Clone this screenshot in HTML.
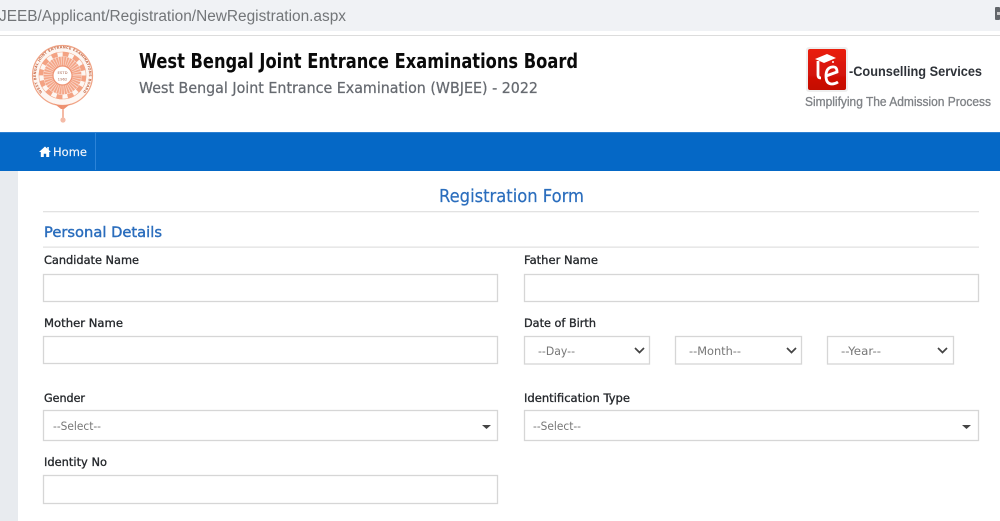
<!DOCTYPE html>
<html lang="en"><head><meta charset="utf-8"><title>Registration Form</title>
<style>
html,body{margin:0;padding:0;background:#fff;width:1000px;height:521px;overflow:hidden}
svg{position:absolute;left:0;top:0;display:block;filter:blur(.28px)}
text{font-family:"DejaVu Sans","Liberation Sans",sans-serif}
.lb{font-size:11.5px;fill:#25282c;stroke:#25282c;stroke-width:.32px}
.ph{font-size:11.5px;fill:#777}
.bx{fill:#fff;stroke:#d6d6d6;stroke-width:1.3px}
</style></head><body>
<svg width="1000" height="521" viewBox="0 0 1000 521" xmlns="http://www.w3.org/2000/svg">
<defs><filter id="b" x="-10%" y="-10%" width="120%" height="120%"><feGaussianBlur stdDeviation=".35"/></filter>
<filter id="s" x="-10%" y="-10%" width="120%" height="120%"><feGaussianBlur stdDeviation=".25"/></filter>
<linearGradient id="rd" x1="0" y1="0" x2="0" y2="1"><stop offset="0" stop-color="#ea2010"/><stop offset="1" stop-color="#c40a02"/></linearGradient>
<path id="arc" d="M43.800 93.700A26.500 26.500 0 1 1 81.200 93.700"/></defs>

<!-- browser bar -->
<rect width="1000" height="31" fill="#f0f2f5"/>
<rect y="35" width="1000" height="1" fill="#dcdcdc"/>
<text x="-1" y="21" font-size="15.500" fill="#727578" textLength="347" lengthAdjust="spacingAndGlyphs" style="font-family:'Liberation Sans',sans-serif">JEEB/Applicant/Registration/NewRegistration.aspx</text>
<rect x="995" y="7" width="5" height="13" rx="1" fill="#62666a"/>
<rect x="997" y="12" width="3" height="3" fill="#ccc"/>

<!-- logo -->
<g filter="url(#b)">
<circle cx="62.500" cy="75.500" r="30" fill="#fdf6f2" stroke="#f0a486" stroke-width="1.200"/>
<circle cx="62.500" cy="75.500" r="23.500" fill="none" stroke="#f3ab8e" stroke-width=".6"/>
<circle cx="62.500" cy="75.500" r="21.500" fill="none" stroke="#f3a283" stroke-width="4.500" stroke-dasharray="6 5.260"/>
<circle cx="62.500" cy="75.500" r="19" fill="#f4a587"/>
<circle cx="62.500" cy="75.500" r="14.500" fill="none" stroke="#fff" stroke-opacity=".55" stroke-width="9" stroke-dasharray=".8 1.500"/>
<circle cx="62.500" cy="75.500" r="9.500" fill="#fff" stroke="#ee9474" stroke-width="1.200"/>
<text x="62.500" y="74" font-size="3.800" text-anchor="middle" fill="#a86650">ESTD</text>
<text x="62.500" y="80.500" font-size="3.800" text-anchor="middle" fill="#a86650">1962</text>
<path d="M54 103.500Q63 107 71 103.500L64 109H61Z" fill="#ee8f6e"/>
<path d="M63 106V118" stroke="#ee9474" stroke-width="1.300"/>
<circle cx="63" cy="120" r="2.600" fill="#f4bba7"/>
</g>
<text font-size="3.500" font-weight="700" fill="#c9704f" filter="url(#s)" textLength="120"><textPath href="#arc" startOffset="2">WEST BENGAL JOINT ENTRANCE EXAMINATIONS BOARD</textPath></text>

<!-- headings -->
<text x="139" y="68" font-size="20" font-weight="700" fill="#0a0a0a" textLength="439" lengthAdjust="spacingAndGlyphs">West Bengal Joint Entrance Examinations Board</text>
<text x="139" y="93" font-size="15" fill="#666a70" stroke="#666a70" stroke-width=".25" textLength="399" lengthAdjust="spacingAndGlyphs">West Bengal Joint Entrance Examination (WBJEE) - 2022</text>

<!-- e-counselling logo -->
<g filter="url(#s)">
<rect x="806" y="47" width="42" height="45" rx="3" fill="#eee"/>
<rect x="808" y="49" width="38" height="41" rx="2" fill="url(#rd)"/>
<path d="M815 59L827 54L836 58L824 63Z" fill="#fff"/>
<path d="M818 61V75Q818 78 821 78" stroke="#fff" stroke-width="2.800" fill="none"/>
<path d="M833 61V63" stroke="#fff" stroke-width="1.500"/>
<path d="M826 76L837 72Q837 66 832 67Q826 68 826 76Q826 84 832 84Q835 84 838 82" stroke="#fff" stroke-width="2.800" fill="none"/>
</g>
<text x="849" y="76" font-size="13.500" font-weight="700" fill="#2e3238" textLength="133" lengthAdjust="spacingAndGlyphs" style="font-family:'Liberation Sans',sans-serif">-Counselling Services</text>
<text x="805" y="106" font-size="12.500" fill="#7f8286" stroke="#7f8286" stroke-width=".3" textLength="186" lengthAdjust="spacingAndGlyphs" style="font-family:'Liberation Sans',sans-serif">Simplifying The Admission Process</text>

<!-- nav -->
<rect y="132" width="1000" height="39" fill="#0568c6"/>
<rect y="132" width="1000" height="1" fill="#2d80d2"/>
<rect x="95" y="133" width="1" height="37" fill="#2b83d8"/>
<path d="M45 146.500L39 152H40.800V157H43.800V153.800H46.200V157H49.200V152H51L48.800 150V147H47.300V148.600Z" fill="#fff"/>
<text x="53" y="156" font-size="11.500" fill="#f2f6fb" stroke="#f2f6fb" stroke-width=".15" textLength="34" lengthAdjust="spacingAndGlyphs">Home</text>

<!-- sidebar -->
<rect x="0" y="171" width="18" height="350" fill="#e8ebef"/>

<!-- headings -->
<text x="439" y="202" font-size="17.500" fill="#2a6dbd" stroke="#2a6dbd" stroke-width=".2" textLength="145" lengthAdjust="spacingAndGlyphs">Registration Form</text>
<rect x="43" y="211" width="936" height="1.300" fill="#e2e2e2"/>
<text x="44" y="237" font-size="14.500" fill="#2a6dbd" stroke="#2a6dbd" stroke-width=".4" textLength="118" lengthAdjust="spacingAndGlyphs">Personal Details</text>
<rect x="43" y="246.500" width="936" height="1.300" fill="#e2e2e2"/>

<!-- labels -->
<text class="lb" x="44" y="264" textLength="95" lengthAdjust="spacingAndGlyphs">Candidate Name</text>
<text class="lb" x="524" y="264" textLength="74" lengthAdjust="spacingAndGlyphs">Father Name</text>
<text class="lb" x="44" y="327" textLength="79" lengthAdjust="spacingAndGlyphs">Mother Name</text>
<text class="lb" x="524" y="327" textLength="72" lengthAdjust="spacingAndGlyphs">Date of Birth</text>
<text class="lb" x="44" y="402" textLength="41" lengthAdjust="spacingAndGlyphs">Gender</text>
<text class="lb" x="524" y="402" textLength="106" lengthAdjust="spacingAndGlyphs">Identification Type</text>
<text class="lb" x="44" y="466" textLength="63" lengthAdjust="spacingAndGlyphs">Identity No</text>

<!-- inputs -->
<rect class="bx" x="43.500" y="274.500" width="454" height="27"/>
<rect class="bx" x="524.500" y="274.500" width="454" height="27"/>
<rect class="bx" x="43.500" y="336.500" width="454" height="27"/>
<rect class="bx" x="43.500" y="475.500" width="454" height="28"/>

<!-- date selects -->
<rect class="bx" x="524.500" y="336.500" width="125" height="27.500"/>
<rect class="bx" x="675.500" y="336.500" width="126" height="27.500"/>
<rect class="bx" x="827.500" y="336.500" width="126" height="27.500"/>
<text class="ph" x="538" y="355" textLength="37" lengthAdjust="spacingAndGlyphs">--Day--</text>
<text class="ph" x="689" y="355" textLength="52" lengthAdjust="spacingAndGlyphs">--Month--</text>
<text class="ph" x="841" y="355" textLength="40" lengthAdjust="spacingAndGlyphs">--Year--</text>
<g fill="none" stroke="#444" stroke-width="1.700">
<path d="M635 348L639.500 352.500L644 348"/>
<path d="M787 348L791.500 352.500L796 348"/>
<path d="M938 348L942.500 352.500L947 348"/>
</g>

<!-- dropdowns -->
<rect class="bx" x="43.500" y="410.500" width="454" height="30"/>
<rect class="bx" x="524.500" y="410.500" width="454" height="30"/>
<text class="ph" x="53" y="430" textLength="48" lengthAdjust="spacingAndGlyphs">--Select--</text>
<text class="ph" x="533" y="430" textLength="48" lengthAdjust="spacingAndGlyphs">--Select--</text>
<path d="M482 425H491L486.500 429Z" fill="#444"/>
<path d="M962 425H971L966.500 429Z" fill="#444"/>
</svg>
</body></html>
